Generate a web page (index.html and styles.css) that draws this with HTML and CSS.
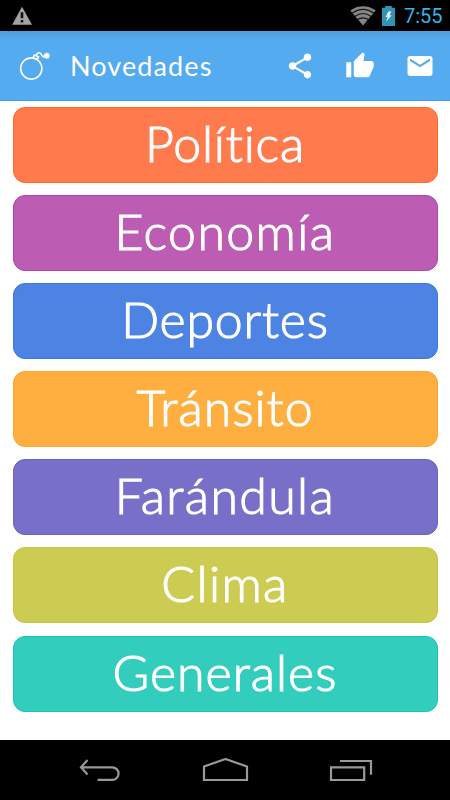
FILE: index.html
```html
<!DOCTYPE html>
<html lang="es">
<head>
    <meta charset="UTF-8" />
    <meta name="viewport" content="width=device-width, initial-scale=1.0" />
    <title>Novedades</title>
    <link rel="stylesheet" href="styles.css">
</head>
<body>
    <div id="app">
        <div class="status-bar">
            <svg class="warning" width="22" height="20" viewBox="0 0 22 20">
                <path d="M11 .8L21 18.700H1.200Z" fill="#a3a3a3" />
                <path d="M11 6.300v6M11 14v2.400" stroke="#111" stroke-width="2.600" />
            </svg>
            <svg class="wifi" width="26" height="20" viewBox="0 0 26 20">
                <path d="M.3 4.500C7.800-1.200 18.200-1.200 25.700 4.500L13 19.500Z" fill="#858585" />
                <path d="M2 7.300q11-8 22 0M4.800 10.400q8.200-5.800 16.400 0M7.600 13.600q5.400-3.600 10.800 0" fill="none" stroke="#161616" stroke-width="1.200" />
            </svg>
            <svg class="battery" width="13" height="20" viewBox="0 0 13 20">
                <path d="M3.200 0h6.600v1.700H13V20H0V1.700h3.200Z" fill="#3293b9" />
                <path d="M6.300 5.500h3L7.600 9.300h2L4.200 15.700l1.500-4.800H3.600Z" fill="#e4f3f8" />
            </svg>
            <span class="clock">7:55</span>
        </div>

        <header class="toolbar">
            <svg class="bomb" width="32" height="30" viewBox="0 0 32 30" fill="none" stroke="#fff">
                <circle cx="12.300" cy="17.500" r="10.600" stroke-width="1.600" />
                <path d="M14.200 6.600l1.200-2.600 4 1.600-.9 2.700" stroke-width="1.600" />
                <path d="M17.200 4.600C18 1.100 21 1.100 22.300 3.400S24.300 6.400 26 5.400" stroke-width="1.600" />
                <path d="M27.700 1.400v6.600M24.500 4.700h6.400M25.400 2.400l4.600 4.600M30 2.400l-4.600 4.600" stroke-width="1.400" />
            </svg>
            <h1>Novedades</h1>
            <div class="actions">
                <svg width="30" height="30" viewBox="0 0 24 24">
                    <path d="M18 16.080c-.76 0-1.440.3-1.960.77L8.910 12.700c.05-.23.09-.46.09-.7s-.04-.47-.09-.7l7.050-4.110c.54.5 1.250.81 2.040.81 1.660 0 3-1.340 3-3s-1.340-3-3-3-3 1.340-3 3c0 .24.040.47.090.7L8.040 9.810C7.500 9.310 6.790 9 6 9c-1.660 0-3 1.340-3 3s1.340 3 3 3c.79 0 1.500-.31 2.040-.81l7.120 4.160c-.05.21-.08.43-.08.65 0 1.610 1.310 2.920 2.920 2.920s2.920-1.310 2.920-2.920-1.310-2.920-2.920-2.920z" />
                </svg>
                <svg width="30" height="30" viewBox="0 0 24 24">
                    <path d="M1 21h4V9H1v12zm22-11c0-1.100-.9-2-2-2h-6.310l.95-4.570.03-.32c0-.41-.17-.79-.44-1.060L14.170 1 7.590 7.590C7.220 7.950 7 8.450 7 9v10c0 1.100.9 2 2 2h9c.83 0 1.540-.5 1.840-1.220l3.020-7.050c.09-.23.14-.47.14-.73v-2z" />
                </svg>
                <svg width="30" height="30" viewBox="0 0 24 24">
                    <path d="M20 4H4c-1.100 0-1.990.9-1.990 2L2 18c0 1.100.9 2 2 2h16c1.100 0 2-.9 2-2V6c0-1.100-.9-2-2-2zm0 4l-8 5-8-5V6l8 5 8-5v2z" />
                </svg>
            </div>
        </header>

        <main class="categories">
            <button class="category politica">Política</button>
            <button class="category economia">Economía</button>
            <button class="category deportes">Deportes</button>
            <button class="category transito">Tránsito</button>
            <button class="category farandula">Farándula</button>
            <button class="category clima">Clima</button>
            <button class="category generales">Generales</button>
        </main>

        <nav class="nav-bar">
            <svg width="44" height="26" viewBox="0 0 44 26">
                <path d="M9.500 2L3 9.300 9.500 16.500M3.500 9.300h30.800a6.200 6.200 0 0 1 0 12.600H19.500" />
            </svg>
            <svg width="48" height="26" viewBox="0 0 48 26">
                <path d="M2 22V8.500L23.500 1 45 8.500V22Z" />
            </svg>
            <svg width="44" height="26" viewBox="0 0 44 26">
                <path d="M2 9.300h33.200V22H2ZM11 3h31v13.800" />
            </svg>
        </nav>
    </div>
</body>
</html>
```
FILE: styles.css
```css
* {
    margin: 0;
    padding: 0;
    box-sizing: border-box;
    font-family: Lato, 'Open Sans', sans-serif;
}

body {
    background: #fff;
    color: #fff;
}

#app {
    display: flex;
    flex-direction: column;
    width: 450px;
    height: 800px;
    overflow: hidden;
}

svg {
    display: block;
    flex: none;
}

.status-bar {
    display: flex;
    align-items: center;
    height: 31px;
    padding: 0 7px 0 11px;
    background: #000;
}

.wifi {
    margin-left: auto;
}

.battery {
    margin: 0 9px 0 6px;
}

.clock {
    width: 39px;
    padding-top: 1px;
    font-family: Roboto, sans-serif;
    font-size: 20px;
    line-height: 31px;
    color: #33b5e5;
}

.toolbar {
    display: flex;
    align-items: center;
    height: 70px;
    padding: 0 15px 0 19px;
    background: linear-gradient(#4e9edb, #55abef 10px);
    border-bottom: 1px solid #36a0ed;
}

.toolbar h1 {
    margin-left: 19px;
    font-size: 27px;
    font-weight: 400;
    letter-spacing: 1.1px;
}

.actions {
    display: flex;
    gap: 30px;
    margin-left: auto;
    fill: #fff;
}

.categories {
    display: flex;
    flex: 1;
    flex-direction: column;
    gap: 12.1px;
    padding: 6px 12.5px 0;
}

.category {
    height: 76px;
    border: 1px solid;
    border-radius: 12px;
    padding-bottom: 5px;
    font-size: 50px;
    font-weight: 300;
    line-height: 70px;
    color: #fff;
    letter-spacing: 1.4px;
    -webkit-text-stroke: 1.1px #fff;
}

.politica {
    background: #ff7a4d;
    border-color: #ff6a22;
    letter-spacing: 0.8px;
}

.economia {
    background: #bc5db3;
    border-color: #b043a8;
}

.deportes {
    background: #4d83e2;
    border-color: #3979df;
    letter-spacing: 0.8px;
}

.transito {
    background: #ffae40;
    border-color: #ffa52e;
    letter-spacing: 1px;
}

.farandula {
    background: #776fc8;
    border-color: #6b62c1;
}

.clima {
    background: #cccc52;
    border-color: #c6c642;
}

.generales {
    background: #32cdbd;
    border-color: #16c6b3;
    letter-spacing: 1px;
}

.nav-bar {
    display: flex;
    align-items: center;
    justify-content: space-between;
    height: 60px;
    padding: 2px 77px 0 78px;
    background: #000;
    fill: none;
    stroke: #999;
    stroke-width: 2.2;
}
```
